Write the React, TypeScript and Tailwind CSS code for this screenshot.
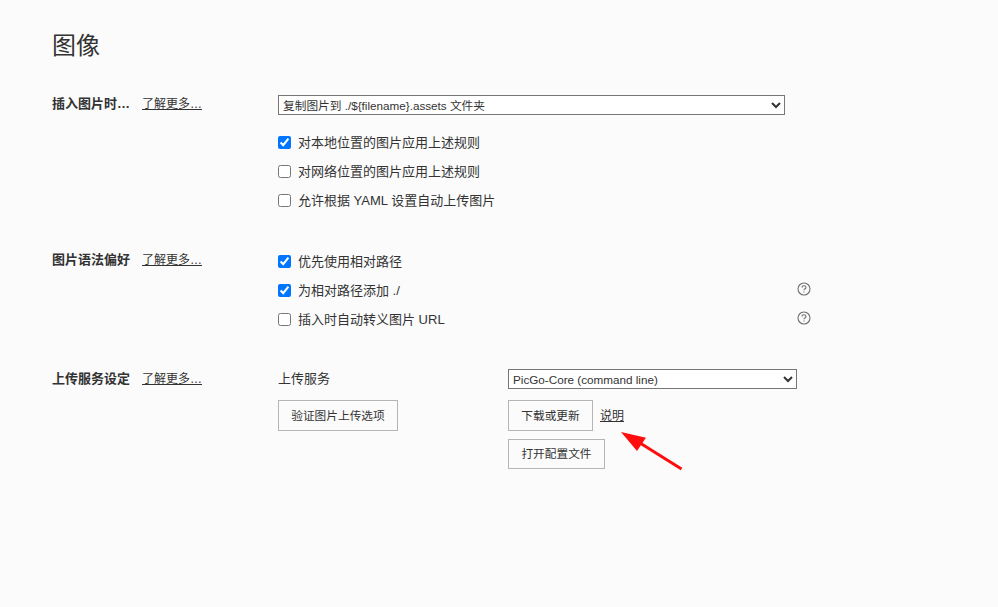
import React from "react";

function Check({ label, checked, help }: { label: string; checked?: boolean; help?: boolean }) {
  return (
    <label className="flex items-center h-[29px] w-[533px]">
      <input type="checkbox" defaultChecked={checked} className="w-[13px] h-[13px] m-0 shrink-0" />
      <span className="ml-[7px] text-[13px] leading-[20px] grow">{label}</span>
      {help && (
        <svg width="14" height="14" viewBox="0 0 14 14" fill="none" stroke="#6f6f6f" strokeWidth="1.1" className="shrink-0 mb-[4px]">
          <circle cx="7" cy="7" r="6" />
          <path d="M5 5.6C5 4.4 5.9 3.7 7 3.7S9 4.4 9 5.4C9 6.7 7 6.8 7 8.3" />
          <path d="M7 9.4V10.5" />
        </svg>
      )}
    </label>
  );
}

function Head({ label }: { label: string }) {
  return (
    <div className="w-[226px] shrink-0 flex items-center h-[18px] whitespace-nowrap">
      <span className="w-[90px] font-bold text-[13px] leading-[18px]">{label}</span>
      <a className="underline text-[12px] leading-[18px]">了解更多…</a>
    </div>
  );
}

function Btn({ label, w, h }: { label: string; w: string; h: string }) {
  return (
    <button className={`${w} ${h} border border-[#b5b5b5] text-[11.7px] text-[#333] bg-transparent`}>{label}</button>
  );
}

export default function App() {
  return (
    <div
      className="relative w-[998px] h-[607px] overflow-hidden bg-[#fbfbfb] text-[#333] pl-[52px] pt-[29px]"
      style={{ fontFamily: '"Liberation Sans", "Noto Sans CJK SC", sans-serif' }}
    >
      <h1 className="text-[24px] leading-[34px] font-normal h-[34px]">图像</h1>

      <section className="flex mt-[32px]">
        <Head label="插入图片时…" />
        <div>
          <select className="block w-[507px] h-[20px] bg-white border border-[#767676] text-[11.7px] text-[#333]">
            <option>复制图片到 ./${"{filename}"}.assets 文件夹</option>
          </select>
          <div className="mt-[13px]">
            <Check label="对本地位置的图片应用上述规则" checked />
            <Check label="对网络位置的图片应用上述规则" />
            <Check label="允许根据 YAML 设置自动上传图片" />
          </div>
        </div>
      </section>

      <section className="flex mt-[33px]">
        <div className="pt-[3px]"><Head label="图片语法偏好" /></div>
        <div className="-mt-[1px]">
          <Check label="优先使用相对路径" checked />
          <Check label="为相对路径添加 ./" checked help />
          <Check label="插入时自动转义图片 URL" help />
        </div>
      </section>

      <section className="flex mt-[35px]">
        <div className="pt-[1px]"><Head label="上传服务设定" /></div>
        <div className="flex">
          <div className="w-[230px]">
            <div className="h-[20px] flex items-center text-[13px]">上传服务</div>
            <div className="mt-[11px]"><Btn label="验证图片上传选项" w="w-[120px]" h="h-[31px]" /></div>
          </div>
          <div>
            <select className="block w-[289px] h-[20px] bg-white border border-[#767676] text-[11.7px] text-[#333]">
              <option>PicGo-Core (command line)</option>
            </select>
            <div className="mt-[11px] flex items-center">
              <Btn label="下载或更新" w="w-[85px]" h="h-[31px]" />
              <a className="ml-[7px] underline text-[12px]">说明</a>
            </div>
            <div className="mt-[8px]"><Btn label="打开配置文件" w="w-[97px]" h="h-[30px]" /></div>
          </div>
        </div>
      </section>

      <svg className="absolute left-[615px] top-[425px]" width="75" height="50" viewBox="0 0 75 50">
        <path d="M66.5 44L25 18" stroke="#ff0d0d" strokeWidth="3" fill="none" />
        <path d="M6 7L31 12.7L27 18.5L22 26Z" fill="#ff0d0d" />
      </svg>
    </div>
  );
}
